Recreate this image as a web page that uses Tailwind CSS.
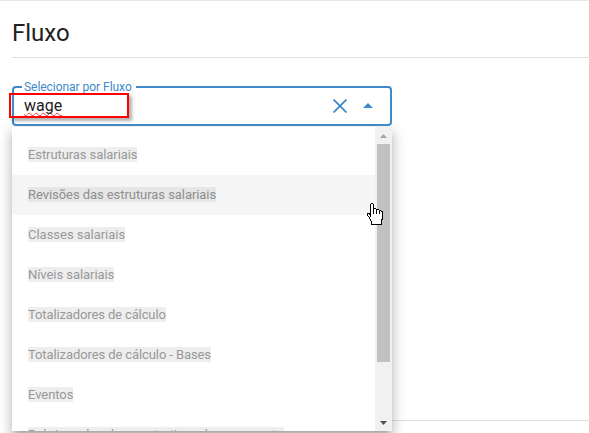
<!DOCTYPE html>
<html lang="pt-BR">

<head>
    <meta charset="UTF-8" />
    <meta name="viewport" content="width=device-width, initial-scale=1.0" />
    <title>Fluxo</title>
    <script src="https://cdn.jsdelivr.net/npm/@tailwindcss/browser@4"></script>
</head>

<body class="h-[433px] overflow-hidden bg-white font-['Roboto',sans-serif] text-[#212121]">
    <div class="relative h-[433px] overflow-hidden border-t border-[#e8e8e8] pl-3">
        <header class="h-[57px] border-b border-[#dedede] pt-4">
            <h1 class="text-[24px] leading-8">Fluxo</h1>
        </header>

        <main class="h-[363px] border-b border-[#dedede] pt-[28px]">
            <!-- field -->
            <div class="relative z-10 flex h-10 w-[380px] items-center rounded-[4px] border-2 border-[#4089c9] bg-white pl-[10px] pr-[17px]">
                <label class="absolute -top-[9px] left-2 bg-white pr-1 pl-[2px] text-[12px] leading-4 tracking-[-0.04px] text-[#4089c9]">Selecionar por Fluxo</label>
                <span class="flex-1 text-[16px] leading-5 underline decoration-[#e53935] decoration-wavy decoration-1 underline-offset-1 [text-decoration-skip-ink:none]">wage</span>
                <svg class="mr-4" width="14" height="14" viewBox="0 0 14 14" fill="none" stroke="#4089c9" stroke-width="1.8">
                    <path d="M.5 .5l13 13M13.5 .5L.5 13.5" />
                </svg>
                <svg class="-mt-px" width="10" height="5" viewBox="0 0 10 5" fill="#4089c9">
                    <path d="M0 5l5-5 5 5z" />
                </svg>
                <!-- highlight -->
                <div class="absolute top-[5px] -left-[5px] h-[25px] w-[120px] border-2 border-[#ff0000] shadow-[3px_3px_3px_rgba(0,0,0,0.3)]"></div>
            </div>

            <!-- options -->
            <div class="mt-px flex h-[304px] w-[380px] bg-white shadow-[0_5px_5px_-3px_rgba(0,0,0,0.2),0_8px_10px_1px_rgba(0,0,0,0.14),0_3px_14px_2px_rgba(0,0,0,0.12)]">
                <ul class="h-[304px] flex-1 overflow-hidden pt-2 text-[13px] leading-[15px] tracking-[-0.08px] text-[#999999]">
                    <li class="flex h-10 items-center px-4 pb-px"><mark class="bg-[#eeeeee] text-inherit">Estruturas salariais</mark></li>
                    <li class="flex h-10 items-center bg-[#f5f5f5] px-4 pb-px tracking-[-0.06px]"><mark class="bg-[#e6e6e6] text-[#8f8f8f]">Revisões das estruturas salariais</mark></li>
                    <li class="flex h-10 items-center px-4 pb-px tracking-[-0.02px]"><mark class="bg-[#eeeeee] text-inherit">Classes salariais</mark></li>
                    <li class="flex h-10 items-center px-4 pb-px tracking-[-0.06px]"><mark class="bg-[#eeeeee] text-inherit">Níveis salariais</mark></li>
                    <li class="flex h-10 items-center px-4 pb-px tracking-[-0.12px]"><mark class="bg-[#eeeeee] text-inherit">Totalizadores de cálculo</mark></li>
                    <li class="flex h-10 items-center px-4 pb-px tracking-[-0.1px]"><mark class="bg-[#eeeeee] text-inherit">Totalizadores de cálculo - Bases</mark></li>
                    <li class="flex h-10 items-center px-4 pb-px tracking-[-0.06px]"><mark class="bg-[#eeeeee] text-inherit">Eventos</mark></li>
                    <li class="flex h-10 items-center px-4 pb-px tracking-[0.02px]"><mark class="bg-[#eeeeee] text-inherit">Rubricas dos demonstrativos de pagamento</mark></li>
                </ul>
                <!-- scrollbar -->
                <div class="flex w-[17px] flex-col items-center bg-[#f1f1f1]">
                    <div class="flex h-[17px] items-center justify-center">
                        <svg width="7" height="4" viewBox="0 0 7 4" fill="#a3a3a3"><path d="M0 4l3.5-4L7 4z" /></svg>
                    </div>
                    <div class="h-[218px] w-[13px] bg-[#c1c1c1]"></div>
                    <div class="mt-auto flex h-[17px] items-center justify-center">
                        <svg width="7" height="4" viewBox="0 0 7 4" fill="#505050"><path d="M0 0l3.5 4L7 0z" /></svg>
                    </div>
                </div>
            </div>
        </main>

        <!-- pointer -->
        <svg class="absolute top-[202px] left-[366px] z-20" width="17" height="22" viewBox="0 0 17 22" fill="#fff" stroke="#000" shape-rendering="crispEdges">
            <path d="M4.500 13.500V1.500l1-1h1l1 1v4h2l1 1h2l1 1h1l1 1h1v7l-1 2v4h-10v-3l-1-1-1-3-2-2v-2h2z" />
            <path d="M7.500 5.500v5M10.500 6.500v4M13.500 7.500v3" />
        </svg>
    </div>
</body>

</html>
